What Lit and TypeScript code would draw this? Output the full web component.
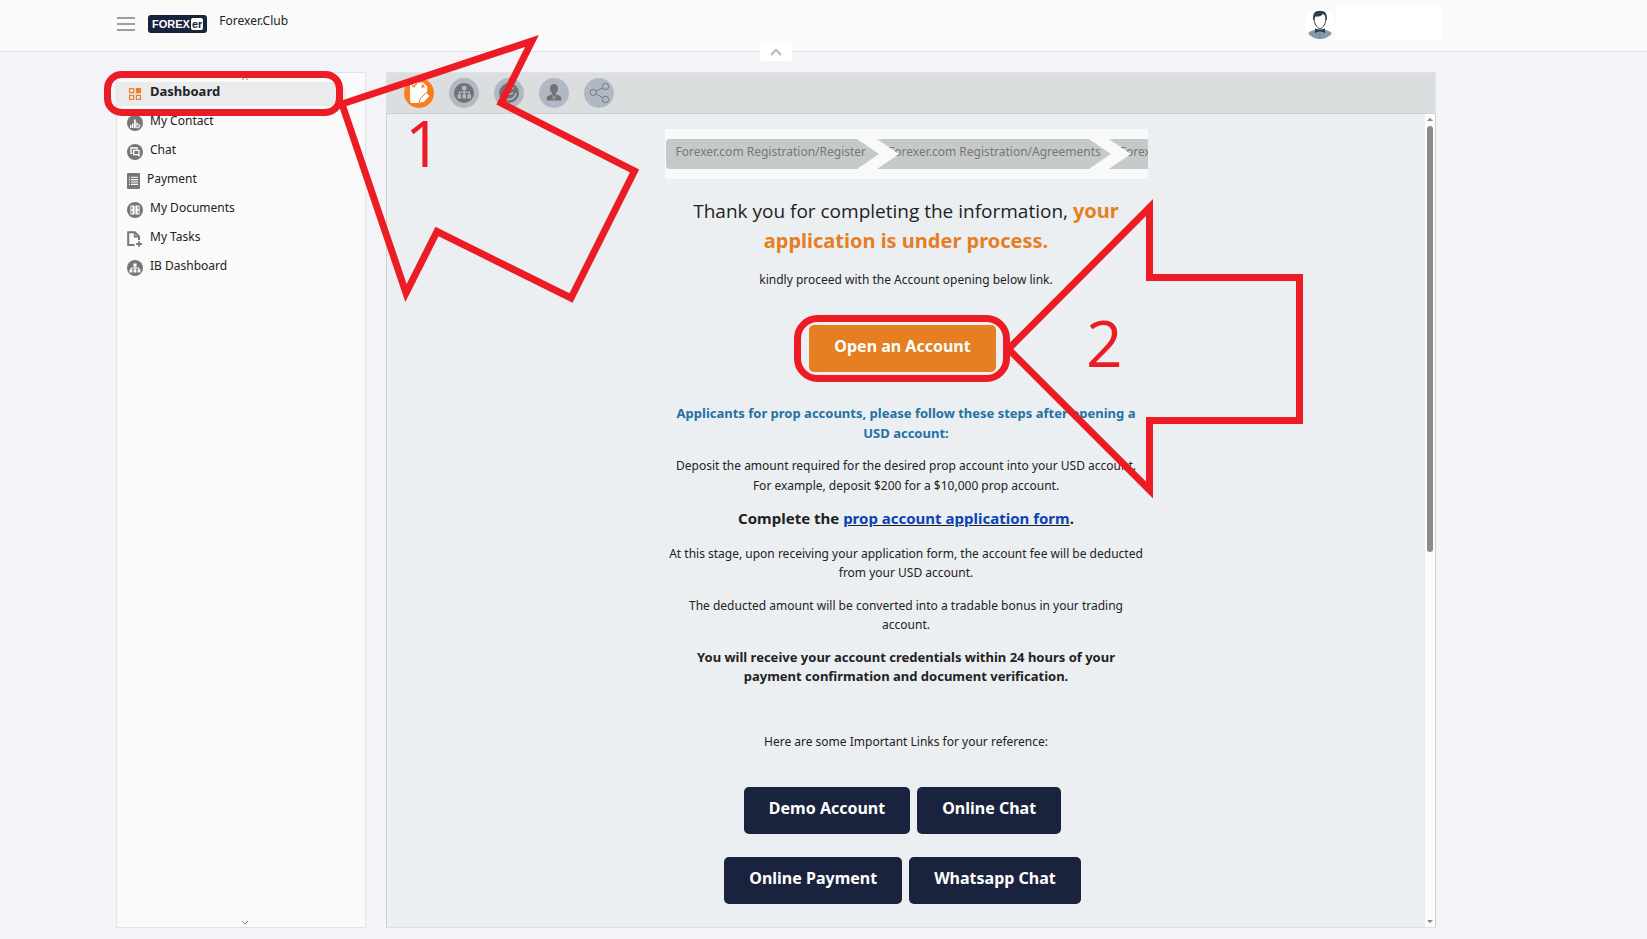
import { LitElement, html, css, svg, TemplateResult } from "lit";
import { customElement, property } from "lit/decorators.js";
import { classMap } from "lit/directives/class-map.js";

const orgChart = svg`
  <path d="M6.4 3.6h3.2v2.8H6.4z M2.6 9.6h2.8v2.8H2.6z M6.6 9.6h2.8v2.8H6.6z M10.6 9.6h2.8v2.8h-2.8z" fill="#fff"/>
  <path d="M8 6v4M4 10V8h8v2" stroke="#fff" fill="none"/>`;

const sideIcons: Record<string, TemplateResult> = {
  dashboard: html`<svg width="16" height="16" viewBox="0 0 16 16" fill="none" stroke="#ef8136" stroke-width="1.3">
    <path d="M2.6 2.6h4v4h-4z M2.6 9.4h4v4h-4z M9.4 9.4h4v4h-4z"/><path d="M9.4 2.6h4v4h-4z" fill="#f77b20" stroke="#f77b20"/></svg>`,
  contact: html`<svg width="16" height="16" viewBox="0 0 16 16"><circle cx="8" cy="8" r="8" fill="#777"/>
    <path d="M3 10h1.4v3H3z M5 8.4h1.4V13H5z M7 4.4h1.7V13H7z" fill="#fff"/><path d="M9.3 7.4h1.2V9H9.3z" fill="#fff"/><circle cx="10.8" cy="11" r="1.9" fill="#9a9a9a" stroke="#fff" stroke-width=".9"/></svg>`,
  chat: html`<svg width="16" height="16" viewBox="0 0 16 16"><circle cx="8" cy="8" r="8" fill="#777"/>
    <path d="M5.600 9.400H4V4h6v1.400" fill="none" stroke="#fff" stroke-width="1.300"/><path d="M6.600 6.400h5.400v5.400l-1.400-1.200h-4z" fill="#777" stroke="#fff" stroke-width="1.300"/></svg>`,
  payment: html`<svg width="13" height="16" viewBox="0 0 13 16"><rect width="13" height="16" rx="1" fill="#777"/>
    <path d="M2 4.2h1M2 6.6h1M2 9h1M2 11.4h1M4 4.2h7M4 6.6h7M4 9h7M4 11.4h7" stroke="#fff" stroke-width="1.1"/></svg>`,
  documents: html`<svg width="16" height="16" viewBox="0 0 16 16"><circle cx="8" cy="8" r="8" fill="#777"/>
    <rect x="3.400" y="3.400" width="4.200" height="9.200" rx=".6" fill="#fff"/><rect x="8.400" y="3.400" width="4.200" height="9.200" rx=".6" fill="#fff"/>
    <path d="M4.800 4.600v2.600M4.800 8.800v2.600M11.200 4.600v2.600M11.200 8.800v2.600" stroke="#8c8c8c" stroke-width="1.400"/></svg>`,
  tasks: html`<svg width="16" height="16" viewBox="0 0 16 16" fill="none" stroke="#777">
    <path d="M7.5 14H1.2V1.2h6.6L12 5.4V9" stroke-width="2"/><path d="M7.6 1.4v4.2H12" stroke-width="1.6"/><path d="M12 10.2v5.6M9.2 13H15" stroke-width="1.9"/></svg>`,
  ib: html`<svg width="16" height="16" viewBox="0 0 16 16"><circle cx="8" cy="8" r="8" fill="#777"/>${orgChart}</svg>`,
};

const toolIcons: { label: string; icon: TemplateResult }[] = [
  { label: "Registration", icon: html`<svg width="30" height="30" viewBox="0 0 30 30"><circle cx="15" cy="15" r="15" fill="#f97c1e"/>
    <path d="M8 4.500h11l4.200 4v5.600l-6.600 6.200-1.400 4.600H7.200L6 23.400V7z" fill="#fff"/><path d="M7.800 6.600l2 2.200 3-3.400" fill="none" stroke="#f97c1e" stroke-width="1.400"/><path d="M16.800 9.400l2-3.600 2.400 3.600z" fill="#f97c1e"/>
    <path d="M22.400 14.400l3.600 3.400-6 6.600-4.800.8.800-4.200z" fill="#fff" stroke="#f97c1e" stroke-width="1"/></svg>` },
  { label: "Structure", icon: html`<svg width="30" height="30" viewBox="0 0 30 30"><circle cx="15" cy="15" r="15" fill="#b0b9c3"/><circle cx="15" cy="15" r="10" fill="#727272"/>
    <path d="M13 8h4.4v4H13z M8.6 16.6H12v4H8.6z M13.4 16.6H17v4h-3.6z M18.4 16.6H22v4h-3.6z" fill="#b0b9c3"/><path d="M15.2 11.5v5.5M10.3 17v-2.8h10V17" fill="none" stroke="#b0b9c3" stroke-width="1.2"/></svg>` },
  { label: "Currency", icon: html`<svg width="30" height="30" viewBox="0 0 30 30"><circle cx="15" cy="15" r="15" fill="#b0b9c3"/><circle cx="15" cy="15" r="10" fill="#727272"/>
    <path d="M19.5 10.5c-3.4-2.4-7 0-6.2 3.4.5 2.4 4 2.6 5.6.8M21.8 15a6.8 6.8 0 0 1-12.4 3.4" fill="none" stroke="#b0b9c3" stroke-width="1.7"/></svg>` },
  { label: "Profile", icon: html`<svg width="30" height="30" viewBox="0 0 30 30"><circle cx="15" cy="15" r="15" fill="#b0b9c3"/>
    <path d="M15 6c2.700 0 4 1.900 4 4.400 0 2-.8 3.600-2 4.600v1.600c1.800 1 5.300.8 5.300 3.600v2.400H7.700v-2.400c0-2.800 3.500-2.600 5.300-3.600V15c-1.200-1-2-2.600-2-4.600C11 7.900 12.300 6 15 6z" fill="#727272"/><path d="M13.400 17.400l1.600 4 1.600-4" fill="none" stroke="#b0b9c3" stroke-width=".8"/></svg>` },
  { label: "Share", icon: html`<svg width="30" height="30" viewBox="0 0 30 30"><circle cx="15" cy="15" r="15" fill="#b0b9c3"/>
    <g fill="none" stroke="#777" stroke-width="1"><circle cx="9.300" cy="14.500" r="3.100"/><circle cx="21.500" cy="8.500" r="3.200"/><circle cx="21.500" cy="21.500" r="3.200"/><path d="M12.100 13.100l6.500-3.200M12.100 15.900l6.700 4"/></g></svg>` },
];

@customElement("app-header")
class AppHeader extends LitElement {
  static styles = css`
    :host { display: block; background: #fafafa; border-bottom: 1px solid #e1e1e6; }
    .bar { display: flex; align-items: center; height: 51px; padding: 0 204px 0 117px; box-sizing: border-box; position: relative; }
    button { border: 0; padding: 0; background: none; display: block; cursor: pointer; }
    .logo { display: flex; align-items: center; height: 18px; margin: 0 12px 4px 13px; padding: 0 4px; box-sizing: border-box; border-radius: 3px; background: #1a233d; color: #fff; font: bold 11px/18px "Liberation Sans", sans-serif; text-decoration: none; }
    .logo span { background: #fff; color: #1a233d; border-radius: 2px; line-height: 12px; padding: 0 1px; margin-left: 1px; }
    .menu { padding-bottom: 4px; }
    .menu svg { display: block; }
    .name { font-size: 12px; line-height: 20px; padding-bottom: 10px; }
    .user { margin-left: auto; display: flex; align-items: center; gap: 1px; padding-bottom: 4px; }
    .blank { width: 107px; height: 33px; background: #fff; }
    .collapse { position: absolute; left: 760px; top: 43px; width: 32px; height: 18px; border-radius: 2px; background: #fff; display: grid; place-items: center; }
  `;
  render() {
    return html`<header class="bar">
      <button class="menu" aria-label="Menu"><svg width="18" height="14" viewBox="0 0 18 14"><path d="M0 1h18M0 7h18M0 13h18" stroke="#808080" stroke-width="1.300"/></svg></button>
      <a class="logo" href="#">FOREX<span>er</span></a>
      <div class="name">Forexer.Club</div>
      <div class="user">
        <svg width="30" height="30" viewBox="0 0 30 30"><circle cx="15" cy="15" r="15" fill="#fff"/>
          <path d="M3 24c3-2.600 6.500-3 9-4h6c2.500 1 6 1.400 9 4-3 4-7 6-12 6s-9-2-12-6z" fill="#8798a8"/>
          <path d="M9 8.500c0 6 2.400 9.800 6 11.500 3.600-1.700 6-5.500 6-11.500" fill="#fff" stroke="#2c3e50" stroke-width="1"/>
          <path d="M8.200 11C7.400 5 9.500 1.800 15 1.800S22.600 5 21.800 11l-1.200-.4c.2-3-1-4.800-2.600-5.600-2 2.600-5 2.600-7.600 2.400-.6.900-.8 2-1 3.200z" fill="#2c3e50"/>
          <path d="M10 19.500l4 1.600h2l4-1.600v4.600l-4-1.600h-2l-4 1.600z" fill="#2c3e50"/><path d="M15 23.500v6" stroke="#66788a" stroke-width=".8"/></svg>
        <div class="blank"></div>
      </div>
      <button class="collapse" aria-label="Collapse header"><svg width="12" height="8" viewBox="0 0 12 8"><path d="M1 7l5-5 5 5" fill="none" stroke="#b3bbc4" stroke-width="2"/></svg></button>
    </header>`;
  }
}

@customElement("side-menu")
class SideMenu extends LitElement {
  static styles = css`
    :host { display: flex; flex-direction: column; background: #fafafa; border: 1px solid #e2e2e7; }
    .arrow { display: block; align-self: center; margin-left: 8px; }
    .up { height: 9px; }
    nav { display: flex; flex-direction: column; gap: 5px; flex: 1; }
    a { display: flex; gap: 7px; height: 24px; padding: 0 10px; margin-right: 19px; color: #222; text-decoration: none; font-size: 12px; line-height: 19px; border-radius: 0 12px 12px 0; }
    a svg { margin-top: 4px; }
    .active { background: #eaebed; font-weight: bold; font-size: 13px; }
  `;
  private items = [
    ["dashboard", "Dashboard"], ["contact", "My Contact"], ["chat", "Chat"], ["payment", "Payment"],
    ["documents", "My Documents"], ["tasks", "My Tasks"], ["ib", "IB Dashboard"],
  ];
  render() {
    return html`
      <svg class="arrow up" width="8" height="9" viewBox="0 0 8 9"><path d="M1 7l3-3 3 3" fill="none" stroke="#7d8b99"/></svg>
      <nav>${this.items.map(([k, t], i) => html`<a href="#" class=${classMap({ active: i === 0 })}>${sideIcons[k]}<span>${t}</span></a>`)}</nav>
      <svg class="arrow" width="8" height="8" viewBox="0 0 8 8"><path d="M1 2l3 3 3-3" fill="none" stroke="#7d8b99"/></svg>`;
  }
}

@customElement("step-strip")
class StepStrip extends LitElement {
  static styles = css`
    :host { display: block; background: #f8f9fb; padding: 10px 0 10px 1px; overflow: hidden; }
    ol { display: flex; list-style: none; margin: 0; padding: 0; }
    li { flex: none; height: 30px; box-sizing: border-box; padding: 0 10px 0 11px; margin-left: -2px; background: #c6c9c9; color: #777; font-size: 12px; line-height: 25px; white-space: nowrap;
      clip-path: polygon(0 0, calc(100% - 22px) 0, 100% 50%, calc(100% - 22px) 100%, 0 100%, 22px 50%); }
    li:first-child { margin-left: 0; padding: 0 13px 0 10px; border-radius: 4px 0 0 4px; clip-path: polygon(0 0, calc(100% - 22px) 0, 100% 50%, calc(100% - 22px) 100%, 0 100%); }
  `;
  @property({ attribute: false }) steps: string[] = [];
  render() {
    return html`<ol>${this.steps.map((s) => html`<li>${s}</li>`)}</ol>`;
  }
}

@customElement("main-panel")
class MainPanel extends LitElement {
  static styles = css`
    :host { display: flex; flex-direction: column; min-height: 0; }
    .tools { display: flex; align-items: center; gap: 15px; height: 40px; padding-left: 17px; background: #dadedf; border: 1px solid #e1e3e6; border-bottom: 0; }
    .tools button { border: 0; padding: 0; background: none; display: block; cursor: pointer; }
    .tools svg { display: block; }
    .body { display: flex; flex: 1; min-height: 0; border: 1px solid #cdd1d4; border-bottom-color: #dde0e3; }
    .content { flex: 1; min-width: 0; overflow: hidden; background: #ebeff2; padding-top: 15px; }
    .column { width: 483px; margin: 0 auto; text-align: center; font-size: 12px; line-height: 20px; color: #222; }
    .column p, .column h1, .column h2 { margin: 0; font-size: 12px; font-weight: normal; }
    .column h1 { margin-top: 17px; font-family: "Open Sans", "Noto Sans", sans-serif; font-size: 19px; line-height: 30px; }
    h1 strong { font-family: "Noto Sans", sans-serif; font-size: 20px; line-height: 20px; color: #e67e22; }
    .lead { padding-top: 14px; }
    .actions { display: flex; justify-content: center; flex-wrap: wrap; gap: 23px 7px; padding: 36px 7px 0 0; }
    .lead + .actions { padding-top: 35px; }
    .btn { padding: 9px 25px 14px; border-radius: 5px; background: #1a233d; color: #fff; font-weight: bold; font-size: 16px; line-height: 24px; text-decoration: none; }
    .primary { background: #e67e22; }
    .column .steps { padding-top: 31px; font-size: 13px; font-weight: bold; color: #2471a3; }
    .deposit { padding-top: 13px; }
    .column .form { padding-top: 12px; font-size: 15px; font-weight: bold; }
    .form u { text-decoration-color: #222; }
    .form a { color: #0c43b4; text-decoration: none; }
    .note { padding-top: 15px; line-height: 19px; }
    .form + .note { padding-top: 16px; }
    .note + .note { padding-top: 14px; }
    .column .strong { padding-top: 14px; font-size: 13px; font-weight: bold; line-height: 19px; }
    .links { padding-top: 46px; line-height: 19px; }
    .scroll { display: flex; flex-direction: column; align-items: center; width: 10px; background: #fcfcfc; }
    .track { flex: 1; align-self: stretch; padding: 0 2px; }
    .thumb { height: 54%; border-radius: 3px; background: #8b8b8b; }
  `;
  private steps = ["Forexer.com Registration/Register", "Forexer.com Registration/Agreements", "Forexer.com Registration/Documents"];
  render() {
    return html`
      <div class="tools" role="toolbar">${toolIcons.map((t) => html`<button aria-label=${t.label}>${t.icon}</button>`)}</div>
      <div class="body">
        <main class="content"><div class="column">
          <step-strip .steps=${this.steps}></step-strip>
          <h1>Thank you for completing the information, <strong>your application is under process.</strong></h1>
          <p class="lead">kindly proceed with the Account opening below link.</p>
          <div class="actions"><a class="btn primary" href="#">Open an Account</a></div>
          <h2 class="steps">Applicants for prop accounts, please follow these steps after opening a USD account:</h2>
          <p class="deposit">Deposit the amount required for the desired prop account into your USD account.<br>For example, deposit $200 for a $10,000 prop account.</p>
          <p class="form">Complete the <u><a href="#">prop account application form</a></u>.</p>
          <p class="note">At this stage, upon receiving your application form, the account fee will be deducted from your USD account.</p>
          <p class="note">The deducted amount will be converted into a tradable bonus in your trading account.</p>
          <p class="strong">You will receive your account credentials within 24 hours of your<br>payment confirmation and document verification.</p>
          <p class="links">Here are some Important Links for your reference:</p>
          <div class="actions">
            <a class="btn" href="#">Demo Account</a><a class="btn" href="#">Online Chat</a>
            <a class="btn" href="#">Online Payment</a><a class="btn" href="#">Whatsapp Chat</a>
          </div>
        </div></main>
        <div class="scroll">
          <svg width="10" height="12" viewBox="0 0 10 12"><path d="M2 7l3-3.200L8 7z" fill="#8b8b8b"/></svg>
          <div class="track"><div class="thumb"></div></div>
          <svg width="10" height="12" viewBox="0 0 10 12"><path d="M2 5l3 3.200L8 5z" fill="#8b8b8b"/></svg>
        </div>
      </div>`;
  }
}

@customElement("guide-marks")
class GuideMarks extends LitElement {
  static styles = css`
    :host { display: block; position: absolute; left: 0; top: 0; pointer-events: none; }
    svg { display: block; }
    .line { fill: none; stroke: #ed1c24; stroke-width: 7; stroke-miterlimit: 10; }
    .digit { fill: #ed1c24; font-size: 64px; font-family: "Open Sans", "Noto Sans", sans-serif; }
  `;
  render() {
    return html`<svg width="1440" height="520" viewBox="0 0 1440 520">
      <rect class="line" x="107.500" y="74.500" width="232" height="38" rx="14"/>
      <path class="line" d="M342 104L532 41L501 103L634.500 171L571 298L437 231.500L406 293z"/>
      <text class="digit" x="405" y="167">1</text>
      <rect class="line" x="797.500" y="318.500" width="209" height="60" rx="20"/>
      <path class="line" d="M1008.400 349L1149.500 207.500V277.500H1299.500V420.500H1149.500V490z"/>
      <text class="digit" x="1086" y="367">2</text>
    </svg>`;
  }
}

@customElement("app-root")
class AppRoot extends LitElement {
  static styles = css`
    :host { display: flex; flex-direction: column; height: 100vh; position: relative; overflow: hidden; background: #f4f3f8; color: #222; font-family: "Noto Sans", "Open Sans", sans-serif; }
    .page { flex: 1; min-height: 0; display: grid; grid-template-columns: 250px minmax(0, 1fr); grid-template-rows: minmax(0, 1fr); gap: 20px; padding: 20px 211px 11px 116px; }
  `;
  render() {
    return html`<app-header></app-header>
      <div class="page"><side-menu></side-menu><main-panel></main-panel></div>
      <guide-marks></guide-marks>`;
  }
}
